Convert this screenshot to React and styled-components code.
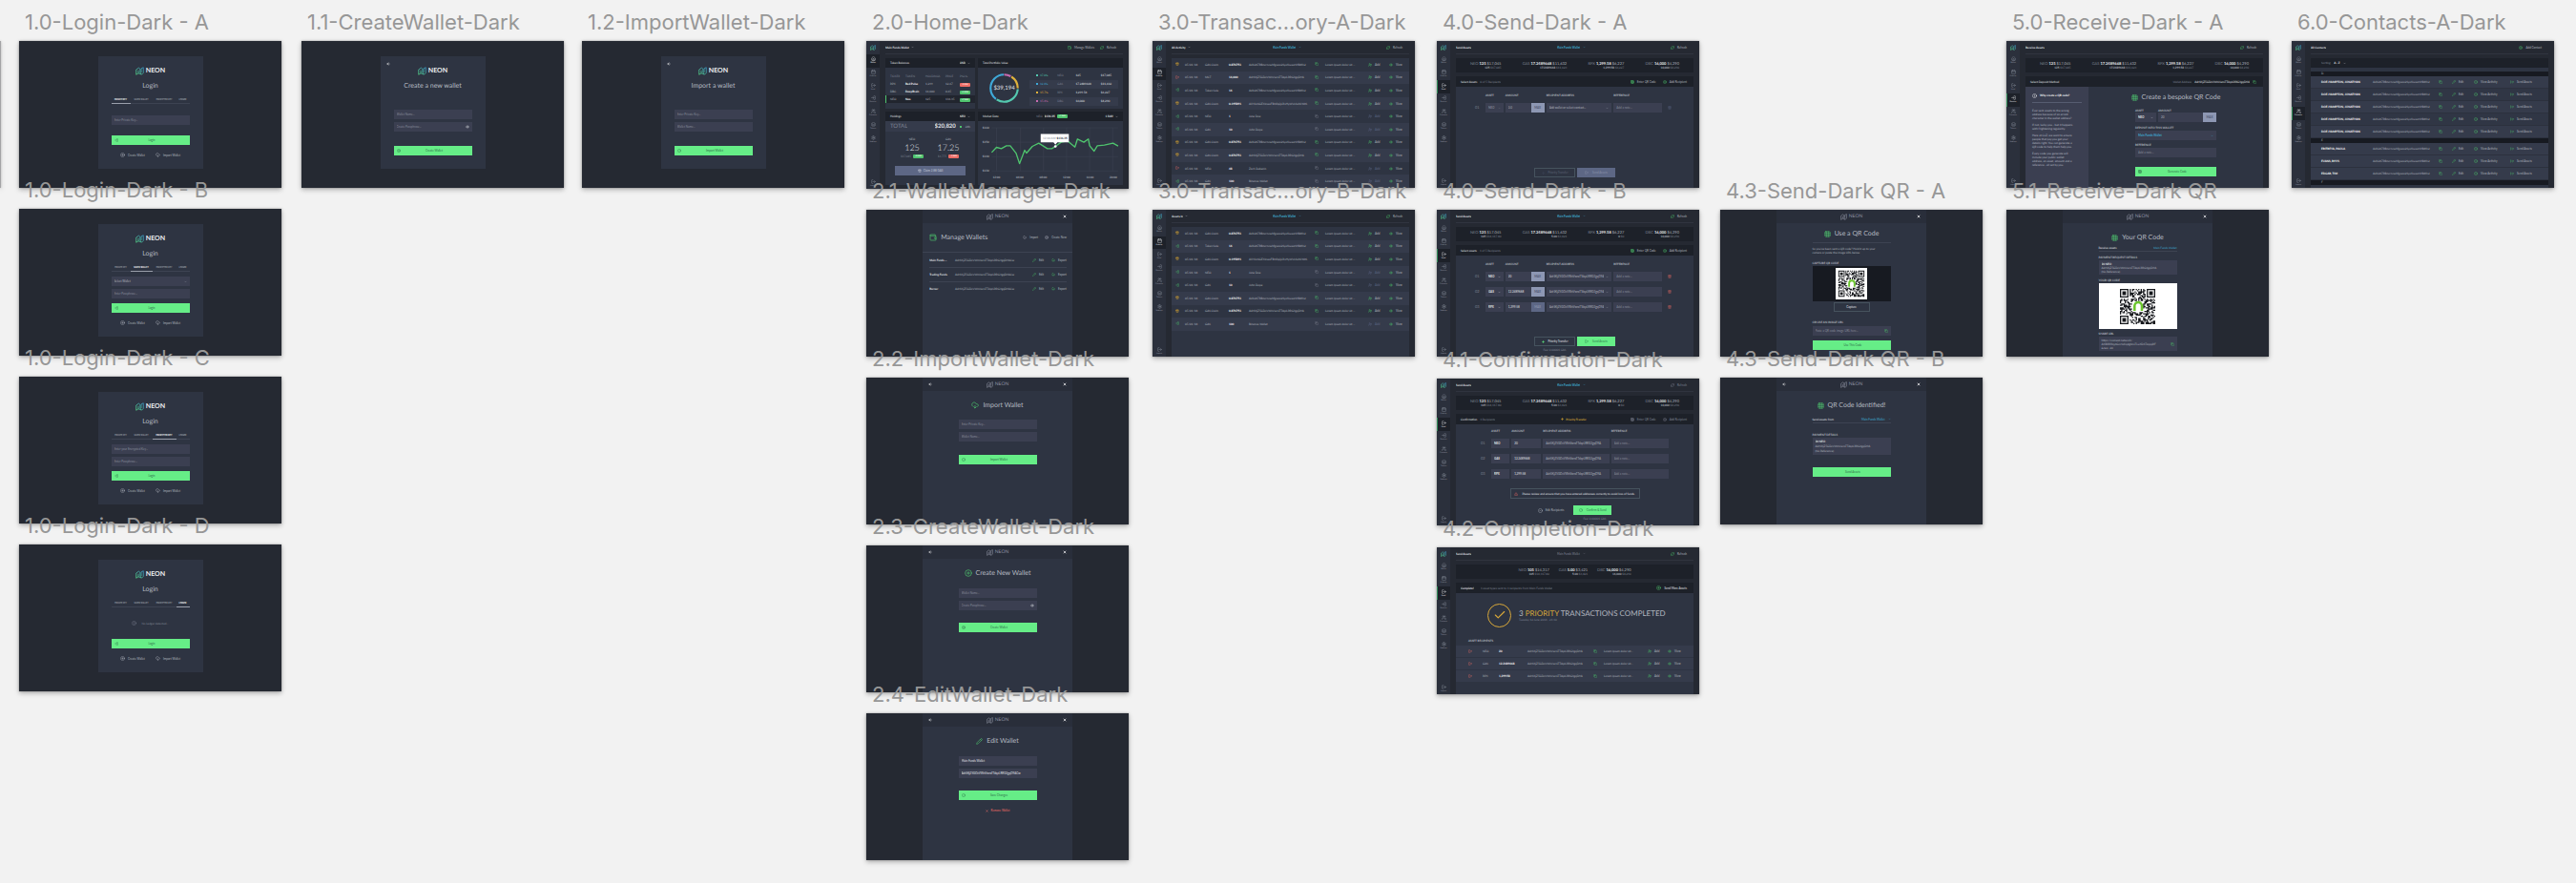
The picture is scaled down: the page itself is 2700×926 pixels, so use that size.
import React, { useId } from "react";
import styled, { createGlobalStyle, css } from "styled-components";
import {
  ArrowLeft, ArrowRightFromLine, Calendar, Check, ChevronDown, CircleCheck, CirclePlus,
  CloudDownload, CloudUpload, Copy, Eye, Grid3x3, Home, Info, Layers, LogIn, LogOut, Pencil,
  RefreshCw, Settings, Trash2, TriangleAlert, UserPlus, Users, Wallet, X, Zap, Gift,
} from "lucide-react";

const c = {
  canvas: "#f2f2f2",
  label: "#979797",
  screen: "#252932",
  panel: "#2e3442",
  side: "#2b303c",
  head: "#1d2129",
  deep: "#171a21",
  field: "#3b3f51",
  stripe: "#353b4b",
  line: "#3d4352",
  text: "#e0e3e8",
  soft: "#b0b4be",
  muted: "#7f8493",
  green: "#66ed87",
  leaf: "#4fc46e",
  red: "#ee6d66",
  gold: "#d8a83a",
  blue: "#3fa9cf",
  slate: "#5d6785",
  mist: "#8d97b3",
};

const Global = createGlobalStyle`
  *, *::before, *::after { box-sizing: border-box; }
  body { margin: 0; background: ${c.canvas}; }
  svg { flex: none; display: block; }
  button, input, select { font: inherit; color: inherit; border: 0; margin: 0; padding: 0; background: none; min-width: 0; }
  h2, h3, p, table { margin: 0; }
  a { color: inherit; text-decoration: none; }
`;

/* ---------- canvas ---------- */

const Canvas = styled.main`
  display: grid;
  grid-template-columns:
    20fr 275fr 21fr 275fr 19fr 275fr 23fr 275fr 25fr 275fr 23fr 275fr 22fr 275fr 25fr 275fr 24fr 275fr 23fr;
  align-items: start;
  min-height: 100vh;
  padding-top: 43px;
  overflow: hidden;
`;

const Column = styled.div`
  grid-column: ${(p) => p.$at * 2};
  grid-row: 1;
  display: flex;
  flex-direction: column;
  gap: ${(p) => (p.$loose ? 23 : 22)}px;
  padding-top: ${(p) => (p.$lowered ? 177 : 0)}px;
`;

const shadow = css`box-shadow: 0 2px 5px rgba(0, 0, 0, 0.28), 0 0 2px rgba(0, 0, 0, 0.3);`;

const Sliver = styled.div`
  grid-column: 1;
  grid-row: 1;
  width: 1px;
  height: 154px;
  background: #a4a4a6;
  ${shadow}
`;

const Frame = styled.section`
  position: relative;
  aspect-ratio: 275 / 154;
`;

const Label = styled.h2`
  position: absolute;
  left: 6px;
  bottom: calc(100% + 6px);
  font: 400 22px/28px Inter, "Liberation Sans", sans-serif;
  color: ${c.label};
  white-space: nowrap;
`;

const Screen = styled.div`
  display: flex;
  height: 100%;
  overflow: hidden;
  background: ${c.screen};
  color: ${c.text};
  font: 400 3px/4px Lato, "Open Sans", sans-serif;
  text-rendering: geometricPrecision;
  justify-content: ${(p) => (p.$center ? "center" : "flex-start")};
  white-space: nowrap;
  ${shadow}
`;

const Board = ({ title, center, children }) => (
  <Frame>
    <Screen $center={center}>{children}</Screen>
    <Label>{title}</Label>
  </Frame>
);

/* ---------- shared parts ---------- */

const Row = styled.div`
  display: flex;
  align-items: center;
  gap: ${(p) => p.$gap ?? 3}px;
  justify-content: ${(p) => p.$justify ?? "flex-start"};
`;

const Text = styled.span`
  color: ${(p) => c[p.$tone ?? "text"]};
  font-weight: ${(p) => (p.$bold ? 700 : 400)};
  overflow: hidden;
  text-overflow: ellipsis;
`;

const Tint = styled.span`
  display: inline-flex;
  color: ${(p) => c[p.$tone]};
`;

const Action = styled.button`
  display: flex;
  align-items: center;
  gap: 3px;
  color: ${(p) => c[p.$tone ?? "soft"]};
`;

const Field = styled.label`
  display: flex;
  align-items: center;
  gap: 2px;
  height: 10px;
  padding: 0 3px;
  background: ${c.field};
  color: ${(p) => c[p.$tone ?? "text"]};
  font-weight: ${(p) => (p.$bold ? 700 : 400)};
  min-width: 0;
  input, select { flex: 1; width: 100%; height: 100%; outline: 0; appearance: none; }
  input::placeholder { color: #868b99; opacity: 1; }
`;

const Input = ({ name, value, tone, bold, children }) => (
  <Field $tone={tone} $bold={bold}>
    <input aria-label={name} placeholder={name} defaultValue={value} />
    {children}
  </Field>
);

const Choice = ({ name, value, tone, bold }) => (
  <Field $tone={tone} $bold={bold}>
    <select aria-label={name} defaultValue={value}>
      <option>{value}</option>
    </select>
    <ChevronDown size={3} />
  </Field>
);

const Primary = styled.button`
  display: grid;
  grid-template-columns: 8px 1fr 8px;
  align-items: center;
  flex: none;
  height: 10px;
  padding-left: 3px;
  background: ${c.green};
  color: #2f6e4a;
  text-align: center;
`;

const Big = ({ icon: Icon, children }) => (
  <Primary>
    <span>{Icon && <Icon size={4} />}</span>
    <span>{children}</span>
  </Primary>
);

const Compact = styled.button`
  display: flex;
  align-items: center;
  justify-content: center;
  gap: 4px;
  height: 10px;
  width: ${(p) => p.$w}px;
  background: ${(p) => (p.$kind === "outline" ? "none" : p.$kind === "off" ? c.slate : c.green)};
  border: ${(p) => (p.$kind === "outline" ? "1px solid #46535e" : "0")};
  color: ${(p) => (p.$dim ? "#5a6274" : p.$kind === "outline" ? c.text : p.$kind === "off" ? "#8a92aa" : "#2f7a4d")};
`;

const Caption = styled.span`
  color: ${c.soft};
  font-weight: 700;
`;

const Heading = styled.h3`
  display: flex;
  align-items: center;
  justify-content: center;
  gap: 4px;
  font-size: 7px;
  line-height: 10px;
  font-weight: 400;
  color: #b4b8c0;
  svg { color: ${c.leaf}; }
`;

const Mark = ({ size, mono }) => {
  const id = useId();
  return (
    <svg width={size} height={size} viewBox="0 0 24 24" fill="none" aria-hidden="true">
      <defs>
        <linearGradient id={id} x1="0" y1="1" x2="1" y2="0">
          <stop offset="0" stopColor="#57e08a" />
          <stop offset="1" stopColor="#3c9fd0" />
        </linearGradient>
      </defs>
      <path
        d="M2 22V8l7-5 4 3v10l4 6 5-5V2l-6 3v11M2 22l6-4 8 3M8 18V10"
        stroke={mono ? "#8b90a0" : `url(#${id})`}
        strokeWidth="2"
        strokeLinejoin="round"
      />
    </svg>
  );
};

const Brand = styled.div`
  display: flex;
  align-items: center;
  justify-content: center;
  gap: 2px;
  font-size: ${(p) => (p.$small ? 5 : 7)}px;
  line-height: ${(p) => (p.$small ? 7 : 9)}px;
  font-weight: ${(p) => (p.$small ? 400 : 700)};
  color: ${(p) => (p.$small ? "#8b90a0" : "#eceef0")};
`;

/* ---------- login screens ---------- */

const Card = styled.div`
  position: relative;
  display: flex;
  flex-direction: column;
  width: 40%;
  height: 118px;
  margin-top: 16px;
  padding: 11px 14px 0;
  background: ${c.panel};
`;

const Back = styled.button`
  position: absolute;
  top: 6px;
  left: 6px;
  color: #fff;
`;

const CardTitle = styled.h3`
  margin-top: 6px;
  text-align: center;
  font-size: 7px;
  line-height: 10px;
  font-weight: 400;
  color: #b4b8c0;
`;

const Tabs = styled.div`
  display: grid;
  grid-template-columns: 20fr 23fr 25fr 14fr;
  margin-top: 5px;
  height: 9px;
  border-bottom: 1px solid ${c.line};
`;

const Tab = styled.button`
  height: 9px;
  font: ${(p) => (p.$on ? 700 : 500)} 2px/3px Inter, "Liberation Sans", sans-serif;
  color: ${(p) => (p.$on ? "#fff" : c.soft)};
  border-bottom: 1px solid ${(p) => (p.$on ? "#9a9fab" : "transparent")};
`;

const Stack = styled.div`
  display: flex;
  flex-direction: column;
  justify-content: center;
  gap: 3px;
  height: ${(p) => (p.$tall ? 58 : 33)}px;
  padding-top: ${(p) => (p.$tall ? 4 : 0)}px;
`;

const Links = styled.div`
  display: flex;
  justify-content: space-around;
  margin-top: 8px;
  padding: 0 4px;
`;

const TABS = ["PRIVATE KEY", "SAVED WALLET", "ENCRYPTED KEY", "LEDGER"];

const Login = ({ title, tab, children }) => (
  <Board title={title} center>
    <Card>
      <Brand><Mark size={9} />NEON</Brand>
      <CardTitle>Login</CardTitle>
      <Tabs role="tablist">
        {TABS.map((t, i) => <Tab key={t} role="tab" aria-selected={i === tab} $on={i === tab}>{t}</Tab>)}
      </Tabs>
      <Stack>{children}</Stack>
      <Big icon={LogIn}>Login</Big>
      <Links>
        <Action><CirclePlus size={5} />Create Wallet</Action>
        <Action><CloudDownload size={5} />Import Wallet</Action>
      </Links>
    </Card>
  </Board>
);

const Setup = ({ title, heading, action, icon, children }) => (
  <Board title={title} center>
    <Card>
      <Back aria-label="Back"><ArrowLeft size={4} strokeWidth={3} /></Back>
      <Brand><Mark size={9} />NEON</Brand>
      <CardTitle>{heading}</CardTitle>
      <Stack $tall>{children}</Stack>
      <Big icon={icon}>{action}</Big>
    </Card>
  </Board>
);

/* ---------- modal screens ---------- */

const Sheet = styled.div`
  width: 57%;
  background: ${c.panel};
`;

const SheetBar = styled.header`
  display: grid;
  grid-template-columns: 1fr auto 1fr;
  align-items: center;
  height: 14px;
  padding: 0 6px;
  background: #292e3a;
  color: #fff;
  button:last-child { justify-self: end; }
`;

const SheetBody = styled.div`
  display: flex;
  flex-direction: column;
  width: 82px;
  margin: 0 auto;
  padding-top: ${(p) => p.$top ?? 10}px;
`;

const Spacer = styled.div`
  flex: none;
  height: ${(p) => p.$h}px;
`;

const Rule = styled.hr`
  width: 100%;
  height: 1px;
  margin: 4px 0;
  border: 0;
  background: ${c.line};
`;

const Modal = ({ title, back, children }) => (
  <Board title={title} center>
    <Sheet>
      <SheetBar>
        {back ? <button aria-label="Back"><ArrowLeft size={4} strokeWidth={3} /></button> : <span />}
        <Brand $small><Mark size={7} mono />NEON</Brand>
        <button aria-label="Close"><X size={4} strokeWidth={4} /></button>
      </SheetBar>
      {children}
    </Sheet>
  </Board>
);

const ManagerHead = styled.div`
  display: flex;
  align-items: center;
  gap: 7px;
  height: 31px;
  padding: 0 6px 0 7px;
  border-bottom: 1px solid ${c.line};
  ${Heading} { margin-right: auto; }
`;

const WalletTable = styled.table`
  display: block;
  padding: 0 6px 0 7px;
  tbody { display: block; }
  tr {
    display: grid;
    grid-template-columns: 27fr 81fr 19fr 17fr;
    align-items: center;
    height: 15px;
  }
  tr + tr { border-top: 1px solid ${c.line}; }
  td { padding: 0; }
  td:last-child { justify-self: end; }
`;

const Details = styled.div`
  display: flex;
  flex-direction: column;
  justify-content: center;
  gap: ${(p) => p.$gap ?? 0}px;
  height: ${(p) => p.$h}px;
  padding: 0 3px;
  background: ${c.field};
  color: ${c.soft};
`;

const Between = styled.div`
  display: flex;
  justify-content: space-between;
  align-items: center;
  height: 8px;
  border-bottom: 1px solid ${c.line};
`;

const Viewer = styled.div`
  display: flex;
  justify-content: center;
  align-items: center;
  height: ${(p) => (p.$light ? 48 : 37)}px;
  background: ${(p) => (p.$light ? "#fff" : c.deep)};
`;

const Note = styled.p`
  white-space: normal;
  color: ${c.soft};
`;

const qrPath = (() => {
  const n = 29;
  const corner = (x, y, ox, oy) => {
    const a = x - ox;
    const b = y - oy;
    if (a < -1 || b < -1 || a > 7 || b > 7) return null;
    if (a < 0 || b < 0 || a > 6 || b > 6) return false;
    return a === 0 || b === 0 || a === 6 || b === 6 || (a > 1 && a < 5 && b > 1 && b < 5);
  };
  let d = "";
  let seed = 7;
  for (let y = 0; y < n; y++) {
    for (let x = 0; x < n; x++) {
      seed = (seed * 48271) % 2147483647;
      const fixed = [corner(x, y, 0, 0), corner(x, y, n - 7, 0), corner(x, y, 0, n - 7)].find((v) => v !== null);
      const middle = x > 9 && x < 19 && y > 9 && y < 19;
      const on = fixed !== undefined ? fixed : !middle && seed / 2147483647 > 0.45;
      if (on) d += `M${x} ${y}h1v1h-1z`;
    }
  }
  return d;
})();

const QrCode = ({ size, pad }) => (
  <svg width={size} height={size} viewBox={`${-pad} ${-pad} ${29 + pad * 2} ${29 + pad * 2}`} role="img" aria-label="QR code">
    <rect x={-pad} y={-pad} width={29 + pad * 2} height={29 + pad * 2} fill="#fff" />
    <path d={qrPath} fill="#16181c" />
    <path d="M12 18V14a3 3 0 0 1 6 0v4" fill="none" stroke="#6cc62e" strokeWidth="2" />
  </svg>
);

const ADDR = "AdrSKjZ5GDcVWnVwroTTdqzLRRG3gqD9A";
const ADDR2 = "Ad1287RBnvrncwhfgwxx2SyofxuwzS9B8fn2";
const ADDR3 = "AXYJoNGEXinwaFBNfqQLRvHyWVsSohSYdtS";

/* ---------- application shell ---------- */

const Side = styled.nav`
  display: flex;
  flex-direction: column;
  width: 14px;
  flex: none;
  background: ${c.side};
`;

const SideLogo = styled.a`
  display: grid;
  place-items: center;
  height: 14px;
`;

const SideList = styled.div`
  display: grid;
  grid-auto-rows: 1fr;
  height: 96px;
  margin-bottom: auto;
`;

const SideLink = styled.a`
  display: flex;
  flex-direction: column;
  align-items: center;
  justify-content: center;
  font-size: 2px;
  line-height: 3px;
  gap: 1px;
  color: ${(p) => (p.$on ? "#e4e6ea" : "#8e93a0")};
  background: ${(p) => (p.$on ? c.head : "none")};
  border-left: 1px solid ${(p) => (p.$on && p.$bar ? "#2f8a57" : "transparent")};
  padding: 1px 1px 1px 0;
`;

const Main = styled.div`
  display: flex;
  flex-direction: column;
  flex: 1;
  min-width: 0;
  padding: 0 6px;
`;

const TopBar = styled.header`
  display: grid;
  grid-template-columns: 1fr auto 1fr;
  align-items: center;
  flex: none;
  height: 14px;
  margin-bottom: 4px;
  padding-right: 7px;
  border-bottom: 1px solid #30343f;
  > :last-child { justify-self: end; }
`;

const NAV = [["Wallet", Home], ["Activity", Calendar], ["Send", LogOut], ["Receive", LogIn], ["Contacts", Users], ["Tokens", Layers], ["Settings", Settings]];

const Refresh = ({ dim }) => (
  <Action $tone={dim ? "muted" : "soft"}>
    <Tint $tone={dim ? "muted" : "leaf"}><RefreshCw size={4} /></Tint>Refresh
  </Action>
);

const Shell = ({ title, heading, menu, active, wallet, right, children }) => (
  <Board title={title}>
    <Side>
      <SideLogo href="#home" aria-label="Neon"><Mark size={6} /></SideLogo>
      <SideList>
        {NAV.map(([name, Icon], i) => (
          <SideLink key={name} href={`#${name}`} $on={i === active} $bar={i > 1}><Icon size={5} />{name}</SideLink>
        ))}
      </SideList>
      <SideLink href="#logout"><LogOut size={5} />Logout</SideLink>
    </Side>
    <Main>
      <TopBar>
        <Row $gap={2}><Text $bold>{heading}</Text>{menu && <ChevronDown size={3} />}</Row>
        {wallet ? (
          <Action $tone={wallet}><Text $bold={wallet === "blue"} $tone={wallet}>Main Funds Wallet</Text><ChevronDown size={3} /></Action>
        ) : <span />}
        {right ?? <Refresh />}
      </TopBar>
      {children}
    </Main>
  </Board>
);

/* ---------- home ---------- */

const HomeGrid = styled.div`
  display: grid;
  grid-template: 53px 1fr / 94fr 152fr;
  gap: 3px;
  flex: 1;
  min-height: 0;
  margin-bottom: 4px;
`;

const Panel = styled.section`
  display: flex;
  flex-direction: column;
  min-width: 0;
  background: ${c.panel};
`;

const PanelHead = styled.header`
  display: flex;
  justify-content: space-between;
  align-items: center;
  flex: none;
  height: 10px;
  padding: 0 5px;
  background: ${c.head};
  color: ${c.text};
`;

const Pill = styled.span`
  display: inline-block;
  padding: 0 1px;
  border-radius: 1px;
  background: ${(p) => c[p.$tone]};
  color: #fff;
  font-weight: 700;
  font-size: 2px;
  line-height: 4px;
  width: 11px;
  text-align: center;
`;

const Tokens = styled.table`
  display: block;
  padding-top: 4px;
  thead, tbody { display: block; }
  tr {
    display: grid;
    grid-template-columns: 16fr 21fr 21fr 15fr 16fr;
    align-items: center;
    height: 8px;
    padding-left: 4px;
    border-left: 1px solid transparent;
  }
  thead tr { height: 9px; }
  th { font-weight: 400; text-align: left; padding: 0; color: ${c.muted}; }
  td { padding: 0; color: ${c.soft}; line-height: 4px; }
  td:nth-child(2) { font-weight: 700; color: #fff; }
  tr[aria-selected="true"] { background: #21252e; border-color: ${c.leaf}; }
`;

const Legend = styled.table`
  display: block;
  flex: 1;
  tbody { display: block; }
  tr {
    display: grid;
    grid-template-columns: 4px 18fr 19fr 26fr 18fr;
    align-items: center;
    height: 9px;
    padding-left: 7px;
  }
  tr:nth-child(even) { background: ${c.stripe}; }
  td { padding: 0; }
`;

const Dot = styled.span`
  display: block;
  width: 2px;
  height: 2px;
  background: ${(p) => p.$color};
`;

const Slice = styled.span`
  color: ${(p) => p.$color};
`;

const PortfolioBody = styled.div`
  display: flex;
  align-items: center;
  gap: 11px;
  flex: 1;
  padding: 0 5px 0 12px;
`;

const Ring = styled.div`
  display: grid;
  place-items: center;
  svg, span { grid-area: 1 / 1; }
  span { font-size: 6px; line-height: 8px; }
`;

const TotalRow = styled.div`
  display: flex;
  align-items: center;
  gap: 4px;
  height: 11px;
  padding: 0 5px;
  background: ${c.stripe};
  font-size: 6px;
  line-height: 8px;
  small { font-size: 3px; color: ${c.soft}; }
  ${Text}:first-child { margin-right: auto; }
`;

const Coins = styled.div`
  display: grid;
  grid-template-columns: 1fr 1fr;
  padding: 6px 9px 0;
  text-align: center;
`;

const Amount = styled.div`
  font-size: 9px;
  line-height: 14px;
  font-weight: 300;
`;

const Claim = styled.button`
  display: flex;
  align-items: center;
  justify-content: center;
  gap: 2px;
  height: 10px;
  margin: 8px 10px 0;
  background: ${c.slate};
  color: #c3c9d8;
`;

const SLICES = [
  ["#54c9b0", "37.0%", "NEO", "125", "$17,045"],
  ["#3fa9d8", "32.4%", "GAS", "17.2489668", "$11,632"],
  ["#e0b23c", "15.7%", "RPX", "1,299.58", "$6,227"],
  ["#c76bb0", "15.4%", "DBC", "16,000", "$4,290"],
];

const Arc = ({ color, from, length }) => (
  <circle cx="50" cy="50" r="46" fill="none" stroke={color} strokeWidth="7" pathLength="100"
    strokeDasharray={`${length} ${100 - length}`} strokeDashoffset={-from} transform="rotate(-90 50 50)" />
);

const LINE = "43,98 58,82 73,86 89,77 101,77 119,100 130,133 146,91 152,100 170,79 190,69 217,86 231,86 242,79 260,66 280,62 303,81 311,56 331,66 345,56 349,77 363,94 373,77 395,75 422,69 438,78";

const Market = () => (
  <svg width="100%" viewBox="0 0 453 200" fontFamily="Lato, sans-serif" fontSize="9" fontWeight="700" fill="#a5a9b3">
    <g stroke="#3a404f" strokeWidth="2">
      {[58, 133, 205, 277, 349, 421].map((x) => <path key={x} d={`M${x} 21V156`} />)}
      {[21, 66, 111, 156].map((y) => <path key={y} d={`M43 ${y}H438`} />)}
    </g>
    {["$160", "$150", "$140", "$130"].map((t, i) => <text key={t} x="14" y={24 + i * 45}>{t}</text>)}
    {["12:00", "04:00", "08:00", "12:00", "16:00", "20:00"].map((t, i) => (
      <text key={i} x={58 + i * 73} y="180" textAnchor="middle">{t}</text>
    ))}
    <polyline points={LINE} fill="none" stroke={c.leaf} strokeWidth="4" strokeLinejoin="round" />
    <path d="M196 40H284V66H248L242 74L236 66H196Z" fill="#fff" />
    <text x="203" y="56">12:00 AM</text>
    <text x="246" y="56" fill="#22262e">$136.35</text>
    <circle cx="242" cy="79" r="4" fill="#fff" />
  </svg>
);

const HomeScreen = () => (
  <Shell
    title="2.0-Home-Dark"
    heading="Main Funds Wallet"
    menu
    active={0}
    right={
      <Row $gap={6}>
        <Action><Tint $tone="leaf"><Wallet size={4} /></Tint>Manage Wallets</Action>
        <Refresh />
      </Row>
    }
  >
    <HomeGrid>
      <Panel>
        <PanelHead>Token Balances<Row $gap={2}><Text $bold>USD</Text><ChevronDown size={3} /></Row></PanelHead>
        <Tokens>
          <thead><tr>{["TICKER", "TOKEN", "HOLDINGS", "PRICE", "P%L%"].map((t) => <th key={t}>{t}</th>)}</tr></thead>
          <tbody>
            {[["RPX", "Red Pulse", "1,299", "12.67", "-2.31%", "red"], ["DBC", "DeepBrain", "16,000", "0.65", "+1.52%", "leaf"], ["NEO", "Neo", "125", "136.35", "+7.36%", "leaf"]].map((r) => (
              <tr key={r[0]} aria-selected={r[0] === "NEO"}>
                {r.slice(0, 4).map((v) => <td key={v}>{v}</td>)}
                <td><Pill $tone={r[5]}>{r[4]}</Pill></td>
              </tr>
            ))}
          </tbody>
        </Tokens>
      </Panel>
      <Panel>
        <PanelHead>Total Portfolio Value</PanelHead>
        <PortfolioBody>
          <Ring>
            <svg width="31" height="31" viewBox="0 0 100 100">
              <Arc color="#c76bb0" from={0} length={8} />
              <Arc color="#e0b23c" from={9} length={16} />
              <Arc color="#54c9b0" from={26} length={33} />
              <Arc color="#3fa9d8" from={60} length={39} />
            </svg>
            <span>$39,194</span>
          </Ring>
          <Legend>
            <tbody>
              {SLICES.map(([color, share, name, amount, value]) => (
                <tr key={name}>
                  <td><Dot $color={color} /></td>
                  <td><Slice $color={color}>{share}</Slice></td>
                  <td><Text $tone="muted">{name}</Text></td>
                  <td>{amount}</td>
                  <td>{value}</td>
                </tr>
              ))}
            </tbody>
          </Legend>
        </PortfolioBody>
      </Panel>
      <Panel>
        <PanelHead>Holdings<Row $gap={2}><Text $bold>NEO</Text><ChevronDown size={3} /></Row></PanelHead>
        <TotalRow><Text $tone="muted">TOTAL</Text><Text $bold>$20,820</Text><Dot $color={c.leaf} /><small>24h</small></TotalRow>
        <Coins>
          <div>
            <Text $tone="soft">NEO</Text><Amount>125</Amount>
            <Row $gap={2} $justify="center"><Text $tone="muted">$17,045</Text><Pill $tone="leaf">+5.86%</Pill></Row>
          </div>
          <div>
            <Text $tone="soft">GAS</Text><Amount>17.25</Amount>
            <Row $gap={2} $justify="center"><Text $tone="muted">$3,775</Text><Pill $tone="red">-2.56%</Pill></Row>
          </div>
        </Coins>
        <Claim><Gift size={4} />Claim 2.88 GAS</Claim>
      </Panel>
      <Panel>
        <PanelHead>
          Market Data
          <Row $gap={2}><Text $tone="muted">NEO</Text><Text $bold>$136.35</Text><Pill $tone="leaf">+7.36%</Pill></Row>
          <Row $gap={2}><Text $bold>1 DAY</Text><ChevronDown size={3} /></Row>
        </PanelHead>
        <Market />
      </Panel>
    </HomeGrid>
  </Shell>
);

/* ---------- activity ---------- */

const Ledger = styled.table`
  display: block;
  flex: 1;
  min-height: 0;
  background: ${c.panel};
  tbody { display: grid; grid-template-rows: repeat(10, 1fr); height: 100%; }
  tr {
    display: grid;
    grid-template-columns: 10fr 21fr 25fr 21fr 69fr 11fr 45fr 22fr 17fr;
    align-items: center;
    padding: 0 4px;
  }
  tr:nth-child(even) { background: ${c.stripe}; }
  td { padding: 0; min-width: 0; color: ${c.soft}; }
  td:nth-child(4) { font-weight: 700; color: #fff; }
`;

const KINDS = { claim: [Gift, "gold"], out: [LogOut, "red"], in: [LogIn, "leaf"] };

const Kind = ({ kind }) => {
  const [Icon, tone] = KINDS[kind];
  return <Tint $tone={tone}><Icon size={4} /></Tint>;
};

const CopyMark = ({ dim }) => <Tint $tone={dim ? "muted" : "leaf"}><Copy size={4} /></Tint>;

const IconAction = ({ icon: Icon, dim, children }) => (
  <Action $tone={dim ? "slate" : "soft"}><Tint $tone={dim ? "slate" : "leaf"}><Icon size={4} /></Tint>{children}</Action>
);

const claimA = ["claim", "GAS Claim", "0.876751", ADDR2];
const sale = ["in", "Token Sale", "16", ADDR2];
const claimB = ["claim", "GAS Claim", "0.195891", ADDR3];
const jane = ["in", "NEO", "1", "Jane Doe", true];
const john = ["in", "GAS", "10", "John Dope", true];
const claimC = ["claim", "GAS Claim", "0.876751", ADDR];
const zach = ["out", "NEO", "48", "Zach Dubezin", true];
const binance = ["in", "GAS", "100", "Binance Wallet", true];

const Activity = ({ title, heading, rows }) => (
  <Shell title={title} heading={heading} menu active={1} wallet="blue">
    <Ledger>
      <tbody>
        {rows.map(([kind, type, amount, who, known], i) => (
          <tr key={i}>
            <td><Kind kind={kind} /></td>
            <td>05/01/18</td>
            <td>{type}</td>
            <td>{amount}</td>
            <td>{who}</td>
            <td><CopyMark dim={known} /></td>
            <td>Lorem ipsum dolor sit ...</td>
            <td><IconAction icon={UserPlus} dim={known}>Add</IconAction></td>
            <td><IconAction icon={Eye}>View</IconAction></td>
          </tr>
        ))}
      </tbody>
    </Ledger>
  </Shell>
);

/* ---------- send and receive ---------- */

const Balances = styled.div`
  display: flex;
  justify-content: ${(p) => (p.$tight ? "center" : "space-between")};
  align-items: center;
  gap: 10px;
  flex: none;
  height: 15px;
  margin-bottom: 4px;
  padding: 0 15px;
  background: ${c.head};
  text-align: right;
`;

const Balance = styled.div`
  font-size: 4px;
  line-height: 5px;
  color: ${c.muted};
  b { color: #eceef0; }
  em { font-style: normal; color: ${c.soft}; }
  small { display: block; font-size: 3px; line-height: 4px; }
  small b { color: ${c.soft}; }
`;

const BalanceBar = ({ items, tight }) => (
  <Balances $tight={tight}>
    {items.map(([name, amount, value, left, worth]) => (
      <Balance key={name}>{name} <b>{amount}</b> <em>{value}</em><small><b>{left}</b> {worth}</small></Balance>
    ))}
  </Balances>
);

const Work = styled.section`
  display: flex;
  flex-direction: column;
  flex: 1;
  min-height: 0;
  background: ${c.panel};
`;

const WorkHead = styled.header`
  display: grid;
  grid-template-columns: 1fr auto 1fr;
  align-items: center;
  flex: none;
  height: 11px;
  padding: 0 7px 0 5px;
  background: ${c.head};
  > :last-child { justify-self: end; }
`;

const lines = css`
  display: grid;
  align-items: center;
  gap: 2px;
  grid-template-columns: ${(p) => (p.$review ? "9fr 19fr 31fr 69fr 60fr" : "9fr 19fr 41fr 69fr 51fr 11fr")};
  margin: 0 ${(p) => (p.$review ? "26px" : "20px")};
`;

const Captions = styled.div`
  ${lines}
  padding: ${(p) => (p.$review ? "5px 0 6px" : "7px 0 6px")};
  font-weight: 700;
  color: ${c.soft};
`;

const Recipient = styled.div`
  ${lines}
  margin-bottom: 6px;
`;

const Num = styled.span`
  font-size: 4px;
  color: ${c.muted};
`;

const WithMax = styled.div`
  display: grid;
  grid-template-columns: 1fr 14px;
`;

const Max = styled.button`
  background: ${(p) => (p.$dim ? c.slate : c.mist)};
  color: ${(p) => (p.$dim ? "#8a92aa" : "#4d5670")};
  font-weight: 700;
`;

const Foot = styled.div`
  display: flex;
  flex-direction: column;
  align-items: center;
  gap: 6px;
  height: 21px;
  margin-top: auto;
`;

const Fee = styled.div`
  width: 84px;
  margin-top: -4px;
  padding: 0 9px;
  color: ${c.muted};
  text-align: ${(p) => p.$side};
`;

const Captioned = ({ review }) => (
  <Captions $review={review}>
    <span /><span>ASSET</span><span>AMOUNT</span><span>RECIPIENT ADDRESS</span><span>REFERENCE</span>
  </Captions>
);

const QrActions = ({ dim }) => (
  <Row $gap={7}>
    <Action $tone={dim ? "muted" : "soft"}><Tint $tone={dim ? "muted" : "leaf"}><Grid3x3 size={4} /></Tint>Enter QR Code</Action>
    <Action $tone={dim ? "muted" : "soft"}><Tint $tone={dim ? "muted" : "leaf"}><CirclePlus size={4} /></Tint>Add Recipient</Action>
  </Row>
);

const FULL = [
  ["NEO", "125", "$17,045", "125", "$17,045"],
  ["GAS", "17.2489668", "$11,632", "17.2489668", "$11,623"],
  ["RPX", "1,299.58", "$6,227", "1,299.58", "$6,227"],
  ["DBC", "16,000", "$4,290", "16,000", "$4,290"],
];
const SPENT = [
  ["NEO", "125", "$17,045", "105", "$14,317.80"],
  ["GAS", "17.2489668", "$11,632", "5.00", "$3,421"],
  ["RPX", "1,299.58", "$6,227", "0", "$0"],
  ["DBC", "16,000", "$4,290", "16,000", "$4,290"],
];
const AFTER = [
  ["NEO", "105", "$14,317", "105", "$14,317.80"],
  ["GAS", "5.00", "$3,421", "5.00", "$3,421"],
  ["DBC", "16,000", "$4,290", "16,000", "$4,290"],
];

const SEND = [["01", "NEO", "20"], ["02", "GAS", "12.2489668"], ["03", "RPX", "1,299.58"]];

const SendEmpty = () => (
  <Shell title="4.0-Send-Dark - A" heading="Send Assets" active={2} wallet="blue">
    <BalanceBar items={FULL} />
    <Work>
      <WorkHead><Row>Select Assets<Text $tone="muted">0 of 5 Recipients</Text></Row><span /><QrActions /></WorkHead>
      <Captioned />
      <Recipient>
        <Num>01</Num>
        <Choice name="Asset" value="NEO" tone="muted" bold />
        <WithMax><Input name="Amount" value="0.0" tone="soft" /><Max>MAX</Max></WithMax>
        <Choice name="Recipient address" value="Add wallet or select contact..." tone="soft" />
        <Input name="Add a note..." />
        <Row $justify="center"><Tint $tone="slate"><Trash2 size={4} /></Tint></Row>
      </Recipient>
      <Foot>
        <Row $gap={2}>
          <Compact $w={43} $kind="outline" $dim><Zap size={3} />Priority Transfer</Compact>
          <Compact $w={40} $kind="off"><LogOut size={4} />Send Assets</Compact>
        </Row>
      </Foot>
    </Work>
  </Shell>
);

const SendFilled = () => (
  <Shell title="4.0-Send-Dark - B" heading="Send Assets" active={2} wallet="blue">
    <BalanceBar items={SPENT} />
    <Work>
      <WorkHead><Row>Select assets<Text $tone="muted">3 of 5 Recipients</Text></Row><span /><QrActions /></WorkHead>
      <Captioned />
      {SEND.map(([n, asset, amount]) => (
        <Recipient key={n}>
          <Num>{n}</Num>
          <Choice name="Asset" value={asset} bold />
          <WithMax><Input name="Amount" value={amount} /><Max $dim={n === "03"}>MAX</Max></WithMax>
          <Choice name="Recipient address" value={ADDR} tone="soft" />
          <Input name="Add a note..." />
          <Row $justify="center"><Tint $tone="red"><Trash2 size={4} /></Tint></Row>
        </Recipient>
      ))}
      <Foot>
        <Row $gap={2}>
          <Compact $w={43} $kind="outline"><Tint $tone="green"><Zap size={3} fill="currentColor" /></Tint>Priority Transfer</Compact>
          <Compact $w={40}><LogOut size={4} />Send Assets</Compact>
        </Row>
        <Fee $side="left">Fee: 0.00001 GAS</Fee>
      </Foot>
    </Work>
  </Shell>
);

const Warning = styled.p`
  display: flex;
  align-items: center;
  justify-content: center;
  gap: 4px;
  width: 136px;
  height: 11px;
  margin: 4px auto 0;
  border: 1px solid #46535e;
`;

const Confirmation = () => (
  <Shell title="4.1-Confirmation-Dark" heading="Send Assets" active={2} wallet="blue" right={<Refresh dim />}>
    <BalanceBar items={SPENT} />
    <Work>
      <WorkHead>
        <Row>Confirmation<Text $tone="muted">3 Recipients</Text></Row>
        <Row $gap={2}><Tint $tone="gold"><Zap size={3} fill="currentColor" /></Tint><Text $tone="gold" $bold>Priority Transfer</Text></Row>
        <QrActions dim />
      </WorkHead>
      <Captioned review />
      {SEND.map(([n, asset, amount]) => (
        <Recipient key={n} $review>
          <Num>{n}</Num>
          <Input name="Asset" value={asset} bold />
          <Input name="Amount" value={amount} />
          <Input name="Recipient address" value={ADDR} tone="soft" />
          <Input name="Add a note..." />
        </Recipient>
      ))}
      <Warning><Tint $tone="red"><TriangleAlert size={4} /></Tint>Please review and ensure that you have entered addresses correctly to avoid loss of funds.</Warning>
      <Foot>
        <Row $gap={10}>
          <Action><CircleCheck size={5} />Edit Recipients</Action>
          <Compact $w={40}><CircleCheck size={4} />Confirm &amp; Send</Compact>
        </Row>
        <Fee $side="right">Fee: 0.00001 GAS</Fee>
      </Foot>
    </Work>
  </Shell>
);

const Banner = styled.div`
  display: flex;
  align-items: center;
  gap: 8px;
  height: 46px;
  padding-left: 33px;
`;

const Seal = styled.span`
  display: grid;
  place-items: center;
  width: 25px;
  height: 25px;
  border: 1px solid ${c.gold};
  border-radius: 50%;
  color: ${c.gold};
`;

const BannerText = styled.h3`
  font-size: 8px;
  line-height: 10px;
  font-weight: 400;
  color: #b4b8c0;
  b { font-weight: 400; color: ${c.gold}; }
  small { display: block; font-size: 3px; line-height: 4px; color: ${c.muted}; }
`;

const Sent = styled.table`
  display: block;
  margin-top: 3px;
  tbody { display: flex; flex-direction: column; gap: 1px; }
  tr {
    display: grid;
    grid-template-columns: 15fr 17fr 30fr 69fr 11fr 46fr 21fr 18fr;
    align-items: center;
    height: 12px;
    padding: 0 9px 0 13px;
    background: ${c.stripe};
  }
  td { padding: 0; color: ${c.soft}; }
  td:nth-child(3) { font-weight: 700; color: #fff; }
`;

const SentCaption = styled.div`
  padding: 2px 0 0 13px;
`;

const Completion = () => (
  <Shell title="4.2-Completion-Dark" heading="Send Assets" active={2} wallet="muted">
    <BalanceBar items={AFTER} tight />
    <Work>
      <WorkHead>
        <Row $gap={7}><Text $bold>Complete!</Text><Text $tone="muted">3 asset types sent to 3 recipients from Main Funds Wallet</Text></Row>
        <span />
        <Action $tone="text"><Tint $tone="leaf"><CirclePlus size={5} /></Tint>Send More Assets</Action>
      </WorkHead>
      <Banner>
        <Seal><Check size={14} strokeWidth={2} /></Seal>
        <BannerText>3 <b>PRIORITY</b> TRANSACTIONS COMPLETED<small>Tuesday 12 June 2018 - 21:30</small></BannerText>
      </Banner>
      <SentCaption><Caption>ASSET RECIPIENTS</Caption></SentCaption>
      <Sent>
        <tbody>
          {[["NEO", "20"], ["GAS", "12.2489668"], ["RPX", "1,299.58"]].map(([asset, amount]) => (
            <tr key={asset}>
              <td><Kind kind="out" /></td>
              <td>{asset}</td>
              <td>{amount}</td>
              <td>{ADDR}</td>
              <td><CopyMark /></td>
              <td>Lorem ipsum dolor sit...</td>
              <td><IconAction icon={UserPlus}>Add</IconAction></td>
              <td><IconAction icon={Eye}>View</IconAction></td>
            </tr>
          ))}
        </tbody>
      </Sent>
    </Work>
  </Shell>
);

const Split = styled.div`
  display: grid;
  grid-template-columns: 66fr 183fr;
  flex: 1;
`;

const Help = styled.aside`
  display: flex;
  flex-direction: column;
  gap: 3px;
  padding: 6px 7px;
  background: ${c.field};
  color: #b4b8c2;
`;

const HelpTitle = styled.h3`
  display: flex;
  align-items: center;
  gap: 3px;
  height: 11px;
  padding-bottom: 4px;
  margin-bottom: 3px;
  border-bottom: 1px solid #565c70;
  font-size: 3px;
  font-weight: 700;
  color: #fff;
`;

const Bespoke = styled.form`
  display: flex;
  flex-direction: column;
  width: 85px;
  margin: 0 auto;
  padding-top: 6px;
`;

const Pair = styled.div`
  display: grid;
  grid-template-columns: 22px 1fr;
  column-gap: 2px;
`;

const Receive = () => (
  <Shell title="5.0-Receive-Dark - A" heading="Receive Assets" active={3}>
    <BalanceBar items={FULL} />
    <Work>
      <WorkHead>
        Select Deposit Method<span />
        <Row><Text $tone="muted">Wallet Address</Text><Text>{ADDR}</Text><CopyMark /></Row>
      </WorkHead>
      <Split>
        <Help>
          <HelpTitle><Info size={5} />Why create a QR code?</HelpTitle>
          <p>Ever sent assets to the wrong<br />address because of an errant<br />character in the wallet address?</p>
          <p>If not, lucky you - but it happens<br />with frightening regularity.</p>
          <p>Here at CoZ, we want to ensure<br />people that pay you get your<br />details right. You can generate a<br />QR code to help them help you.</p>
          <p>Every code you generate will<br />include your public wallet<br />address, an asset, amount and a<br />reference - all set by you.</p>
        </Help>
        <Bespoke>
          <Heading><Grid3x3 size={7} />Create a bespoke QR Code</Heading>
          <Spacer $h={7} />
          <Pair>
            <Caption>ASSET</Caption><Caption>AMOUNT</Caption>
            <Choice name="Asset" value="NEO" bold />
            <WithMax><Input name="Amount" value="20" tone="soft" /><Max type="button">MAX</Max></WithMax>
          </Pair>
          <Spacer $h={4} />
          <Caption>DEPOSIT INTO THIS WALLET</Caption>
          <Spacer $h={1} />
          <Choice name="Wallet" value="Main Funds Wallet" tone="blue" bold />
          <Spacer $h={3} />
          <Caption>REFERENCE</Caption>
          <Spacer $h={1} />
          <Input name="Add a note..." />
          <Spacer $h={10} />
          <Big icon={Grid3x3}>Generate Code</Big>
        </Bespoke>
      </Split>
    </Work>
  </Shell>
);

/* ---------- contacts ---------- */

const Sorting = styled.div`
  display: flex;
  align-items: center;
  gap: 3px;
  height: 10px;
  margin-bottom: 4px;
  padding-left: 11px;
  background: ${c.head};
`;

const People = styled.table`
  display: block;
  tbody { display: block; }
  tr {
    display: grid;
    grid-template-columns: 54fr 69fr 14fr 23fr 38fr 40fr;
    align-items: center;
    height: 13px;
    padding-left: 11px;
    border-bottom: 1px solid #2c313e;
    background: ${c.stripe};
  }
  tbody:first-child tr:nth-child(odd) { background: #303645; }
  tr.letter, tbody:first-child tr.letter { display: block; height: 5px; background: ${c.deep}; border: 0; }
  th { display: block; padding: 0; text-align: left; font-weight: 400; line-height: 5px; color: ${c.soft}; }
  td { padding: 0; color: ${c.soft}; }
  td:first-child { font-weight: 700; color: #fff; }
`;

const GROUPS = [
  ["D", Array(5).fill("DOE-HAMPTON, JONATHAN")],
  ["E", ["ERITREYA, PAOLA", "EVANS, RHYS", "EDGAR, TIM"]],
  ["F", []],
];

const Contacts = () => (
  <Shell
    title="6.0-Contacts-A-Dark"
    heading="All Contacts"
    active={4}
    right={<Action><Tint $tone="leaf"><CirclePlus size={4} /></Tint>Add Contact</Action>}
  >
    <Work>
      <Sorting><Text $tone="muted">Sorting:</Text><Text $bold>A - Z</Text><ChevronDown size={3} /></Sorting>
      <People>
        {GROUPS.map(([letter, names]) => (
          <tbody key={letter}>
            <tr className="letter"><th scope="rowgroup">{letter}</th></tr>
            {names.map((name, i) => (
              <tr key={i}>
                <td>{name}</td>
                <td>{ADDR2}</td>
                <td><CopyMark /></td>
                <td><IconAction icon={Pencil}>Edit</IconAction></td>
                <td><IconAction icon={Info}>View Activity</IconAction></td>
                <td><IconAction icon={ArrowRightFromLine}>Send Assets</IconAction></td>
              </tr>
            ))}
          </tbody>
        ))}
      </People>
    </Work>
  </Shell>
);

/* ---------- canvas content ---------- */

const ManageWallets = () => (
  <Modal title="2.1-WalletManager-Dark">
    <ManagerHead>
      <Heading><Wallet size={8} />Manage Wallets</Heading>
      <Action><CloudDownload size={4} />Import</Action>
      <Action><CirclePlus size={4} />Create New</Action>
    </ManagerHead>
    <WalletTable>
      <tbody>
        {["Main Funds ...", "Trading Funds", "Burner"].map((name) => (
          <tr key={name}>
            <td><Text $bold>{name}</Text></td>
            <td><Text $tone="soft">{ADDR + "Cw"}</Text></td>
            <td><IconAction icon={Pencil}>Edit</IconAction></td>
            <td><IconAction icon={CloudUpload}>Export</IconAction></td>
          </tr>
        ))}
      </tbody>
    </WalletTable>
  </Modal>
);

export default function App() {
  return (
    <>
      <Global />
      <Canvas>
        <Sliver />
        <Column $at={1}>
          <Login title="1.0-Login-Dark - A" tab={0}><Input name="Enter Private Key..." /></Login>
          <Login title="1.0-Login-Dark - B" tab={1}>
            <Choice name="Saved wallet" value="Select Wallet" tone="soft" />
            <Input name="Enter Passphrase..." />
          </Login>
          <Login title="1.0-Login-Dark - C" tab={2}>
            <Input name="Enter your Encrypted Key..." />
            <Input name="Enter Passphrase..." />
          </Login>
          <Login title="1.0-Login-Dark - D" tab={3}>
            <Row $gap={5} $justify="center"><Tint $tone="muted"><Info size={5} /></Tint><Text $tone="muted">No Ledger detected...</Text></Row>
          </Login>
        </Column>
        <Column $at={2}>
          <Setup title="1.1-CreateWallet-Dark" heading="Create a new wallet" action="Create Wallet" icon={CirclePlus}>
            <Input name="Wallet Name..." />
            <Input name="Create Passphrase..."><Eye size={4} /></Input>
          </Setup>
        </Column>
        <Column $at={3}>
          <Setup title="1.2-ImportWallet-Dark" heading="Import a wallet" action="Import Wallet" icon={CircleCheck}>
            <Input name="Enter Private Key..." />
            <Input name="Wallet Name..." />
          </Setup>
        </Column>
        <Column $at={4}>
          <HomeScreen />
          <ManageWallets />
          <Modal title="2.2-ImportWallet-Dark" back>
            <SheetBody>
              <Heading><CloudDownload size={8} />Import Wallet</Heading>
              <Spacer $h={10} />
              <Input name="Enter Private Key..." /><Spacer $h={3} /><Input name="Wallet Name..." />
              <Spacer $h={14} />
              <Big icon={CircleCheck}>Import Wallet</Big>
            </SheetBody>
          </Modal>
          <Modal title="2.3-CreateWallet-Dark" back>
            <SheetBody>
              <Heading><CirclePlus size={8} />Create New Wallet</Heading>
              <Spacer $h={11} />
              <Input name="Wallet Name..." /><Spacer $h={3} /><Input name="Create Passphrase..."><Eye size={4} /></Input>
              <Spacer $h={13} />
              <Big icon={CirclePlus}>Create Wallet</Big>
            </SheetBody>
          </Modal>
          <Modal title="2.4-EditWallet-Dark" back>
            <SheetBody>
              <Heading><Pencil size={7} />Edit Wallet</Heading>
              <Spacer $h={11} />
              <Input name="Wallet name" value="Main Funds Wallet" /><Spacer $h={3} /><Input name="Address" value={ADDR + "Cw"} />
              <Spacer $h={13} />
              <Big icon={CircleCheck}>Save Changes</Big>
              <Spacer $h={9} />
              <Row $justify="center"><Action $tone="red"><X size={3} strokeWidth={4} />Remove Wallet</Action></Row>
            </SheetBody>
          </Modal>
        </Column>
        <Column $at={5} $loose>
          <Activity
            title="3.0-Transac...ory-A-Dark"
            heading="All Activity"
            rows={[claimA, ["out", "MCT", "16,000", ADDR], sale, claimB, jane, john, claimA, claimC, zach, binance]}
          />
          <Activity
            title="3.0-Transac...ory-B-Dark"
            heading="Assets In"
            rows={[claimA, sale, claimB, jane, john, claimA, claimC, binance]}
          />
        </Column>
        <Column $at={6} $loose>
          <SendEmpty />
          <SendFilled />
          <Confirmation />
          <Completion />
        </Column>
        <Column $at={7} $lowered>
          <Modal title="4.3-Send-Dark QR - A">
            <SheetBody $top={6}>
              <Heading><Grid3x3 size={7} />Use a QR Code</Heading>
              <Rule />
              <Note>So you've been sent a QR code? Hold it up to your<br />camera or paste the image URL below.</Note>
              <Spacer $h={7} />
              <Caption>CAPTURE QR CODE</Caption>
              <Spacer $h={1} />
              <Viewer><QrCode size={33} pad={3} /></Viewer>
              <Spacer $h={1} />
              <Row $justify="center"><Compact $w={38} $kind="outline">Capture</Compact></Row>
              <Spacer $h={9} />
              <Caption>OR USE AN IMAGE URL</Caption>
              <Spacer $h={2} />
              <Input name="Paste a QR code image URL here..."><CopyMark /></Input>
              <Spacer $h={5} />
              <Big>Use This Code</Big>
            </SheetBody>
          </Modal>
          <Modal title="4.3-Send-Dark QR - B" back>
            <SheetBody>
              <Heading><Grid3x3 size={7} />QR Code Identified!</Heading>
              <Spacer $h={6} />
              <Between>
                Send assets from
                <Action $tone="blue">Main Funds Wallet<ChevronDown size={3} /></Action>
              </Between>
              <Spacer $h={10} />
              <Caption>PAYMENT DETAILS</Caption>
              <Spacer $h={1} />
              <Details $h={18} $gap={1}>
                <Text $bold>20 NEO</Text><span>{ADDR}</span><span>(No Reference)</span>
              </Details>
              <Spacer $h={13} />
              <Big>Send Assets</Big>
            </SheetBody>
          </Modal>
        </Column>
        <Column $at={8} $loose>
          <Receive />
          <Modal title="5.1-Receive-Dark QR">
            <SheetBody>
              <Heading><Grid3x3 size={7} />Your QR Code</Heading>
              <Spacer $h={2} />
              <Between>Receive assets<Text $tone="blue">Main Funds Wallet</Text></Between>
              <Spacer $h={4} />
              <Caption>PAYMENT REQUEST DETAILS</Caption>
              <Spacer $h={1} />
              <Details $h={15}>
                <Text $bold>20 NEO</Text><span>{ADDR}</span><span>(No Reference)</span>
              </Details>
              <Spacer $h={4} />
              <Caption>YOUR QR CODE</Caption>
              <Spacer $h={1} />
              <Viewer $light><QrCode size={37} pad={0} /></Viewer>
              <Spacer $h={3} />
              <Caption>SHARE URL</Caption>
              <Spacer $h={1} />
              <Details $h={15}>
                <Row $justify="space-between">
                  <span>https://coznext.network/<br />AXBRRRqytGccSsKqdgbnvTLuXDSTzqqqRF<br />&amp;neo=20</span>
                  <CopyMark />
                </Row>
              </Details>
            </SheetBody>
          </Modal>
        </Column>
        <Column $at={9}>
          <Contacts />
        </Column>
      </Canvas>
    </>
  );
}
